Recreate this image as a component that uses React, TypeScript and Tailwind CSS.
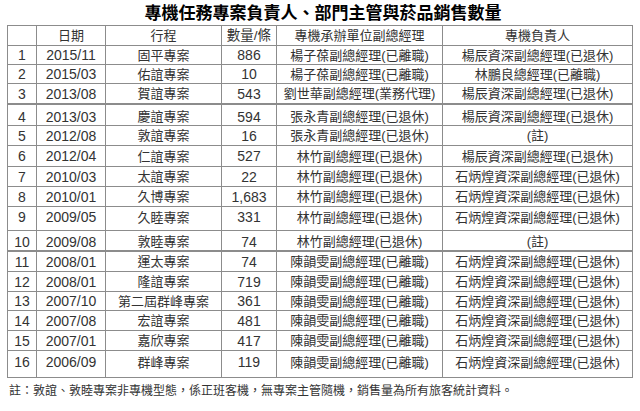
const rows = [
  { n: "1", date: "2015/11", trip: "固平專案", qty: "886", mgr: "楊子葆副總經理(已離職)", owner: "楊辰資深副總經理(已退休)", h: "h-[19px]", off: "" },
  { n: "2", date: "2015/03", trip: "佑誼專案", qty: "10", mgr: "楊子葆副總經理(已離職)", owner: "林鵬良總經理(已離職)", h: "h-[19px]", off: "" },
  { n: "3", date: "2013/08", trip: "賀誼專案", qty: "543", mgr: "劉世華副總經理(業務代理)", owner: "楊辰資深副總經理(已退休)", h: "h-[21px] border-b-2", off: "" },
  { n: "4", date: "2013/03", trip: "慶誼專案", qty: "594", mgr: "張永青副總經理(已退休)", owner: "楊辰資深副總經理(已退休)", h: "h-[21px]", off: "pt-[3px]" },
  { n: "5", date: "2012/08", trip: "敦誼專案", qty: "16", mgr: "張永青副總經理(已退休)", owner: "(註)", h: "h-[20px]", off: "" },
  { n: "6", date: "2012/04", trip: "仁誼專案", qty: "527", mgr: "林竹副總經理(已退休)", owner: "楊辰資深副總經理(已退休)", h: "h-[21px]", off: "" },
  { n: "7", date: "2010/03", trip: "太誼專案", qty: "22", mgr: "林竹副總經理(已退休)", owner: "石炳煌資深副總經理(已退休)", h: "h-[20px]", off: "" },
  { n: "8", date: "2010/01", trip: "久博專案", qty: "1,683", mgr: "林竹副總經理(已退休)", owner: "石炳煌資深副總經理(已退休)", h: "h-[20px]", off: "" },
  { n: "9", date: "2009/05", trip: "久睦專案", qty: "331", mgr: "林竹副總經理(已退休)", owner: "石炳煌資深副總經理(已退休)", h: "h-[24px]", off: "pb-[3px]" },
  { n: "10", date: "2009/08", trip: "敦睦專案", qty: "74", mgr: "林竹副總經理(已退休)", owner: "(註)", h: "h-[21px] border-b-2", off: "pt-[2px]" },
  { n: "11", date: "2008/01", trip: "運太專案", qty: "74", mgr: "陳韻雯副總經理(已離職)", owner: "石炳煌資深副總經理(已退休)", h: "h-[20px]", off: "" },
  { n: "12", date: "2008/01", trip: "隆誼專案", qty: "719", mgr: "陳韻雯副總經理(已離職)", owner: "石炳煌資深副總經理(已退休)", h: "h-[20px]", off: "" },
  { n: "13", date: "2007/10", trip: "第二屆群峰專案", qty: "361", mgr: "陳韻雯副總經理(已離職)", owner: "石炳煌資深副總經理(已退休)", h: "h-[19px]", off: "" },
  { n: "14", date: "2007/08", trip: "宏誼專案", qty: "481", mgr: "陳韻雯副總經理(已離職)", owner: "石炳煌資深副總經理(已退休)", h: "h-[20px]", off: "" },
  { n: "15", date: "2007/01", trip: "嘉欣專案", qty: "417", mgr: "陳韻雯副總經理(已離職)", owner: "石炳煌資深副總經理(已退休)", h: "h-[20px]", off: "" },
  { n: "16", date: "2006/09", trip: "群峰專案", qty: "119", mgr: "陳韻雯副總經理(已離職)", owner: "石炳煌資深副總經理(已退休)", h: "h-[27px]", off: "pb-[4px]" },
]

// widths match the ruled columns in the scan
const grid = "grid grid-cols-[29px_69px_116px_55px_166px_190px] border-b border-[#8c8c8c]"
const cell = "flex items-center justify-center border-r border-[#8c8c8c] whitespace-nowrap"

export default function App() {
  return (
    <div
      className="w-[640px] h-[411px] bg-white text-[#333]"
      style={{ fontFamily: '"Liberation Sans", "Noto Sans CJK TC", sans-serif' }}
    >
      {/* 標題 */}
      <div className="h-[25px] flex items-center justify-center pl-[6px] pt-[2px] text-[17px] font-bold text-black leading-none">
        專機任務專案負責人、部門主管與菸品銷售數量
      </div>

      {/* 表格 */}
      <div className="ml-[7px] w-[626px] border-t border-l border-[#8c8c8c] text-[13px] leading-none">
        <div className={`${grid} h-[20px]`}>
          <div className={cell}></div>
          <div className={cell}>日期</div>
          <div className={cell}>行程</div>
          <div className={`${cell} text-[13.5px]`}>數量/條</div>
          <div className={cell}>專機承辦單位副總經理</div>
          <div className={cell}>專機負責人</div>
        </div>
        {rows.map((r) => (
          <div key={r.n} className={`${grid} ${r.h}`}>
            <div className={`${cell} ${r.off} text-[14px]`}>{r.n}</div>
            <div className={`${cell} ${r.off} text-[14px]`}>{r.date}</div>
            <div className={`${cell} ${r.off}`}>{r.trip}</div>
            <div className={`${cell} ${r.off} text-[14px]`}>{r.qty}</div>
            <div className={`${cell} ${r.off}`}>{r.mgr}</div>
            <div className={`${cell} ${r.off}`}>{r.owner}</div>
          </div>
        ))}
      </div>

      {/* 註 */}
      <p className="pl-[9px] pt-[4px] text-[12px] leading-[18px]">
        註：敦誼、敦睦專案非專機型態，係正班客機，無專案主管隨機，銷售量為所有旅客統計資料。
      </p>
    </div>
  )
}
